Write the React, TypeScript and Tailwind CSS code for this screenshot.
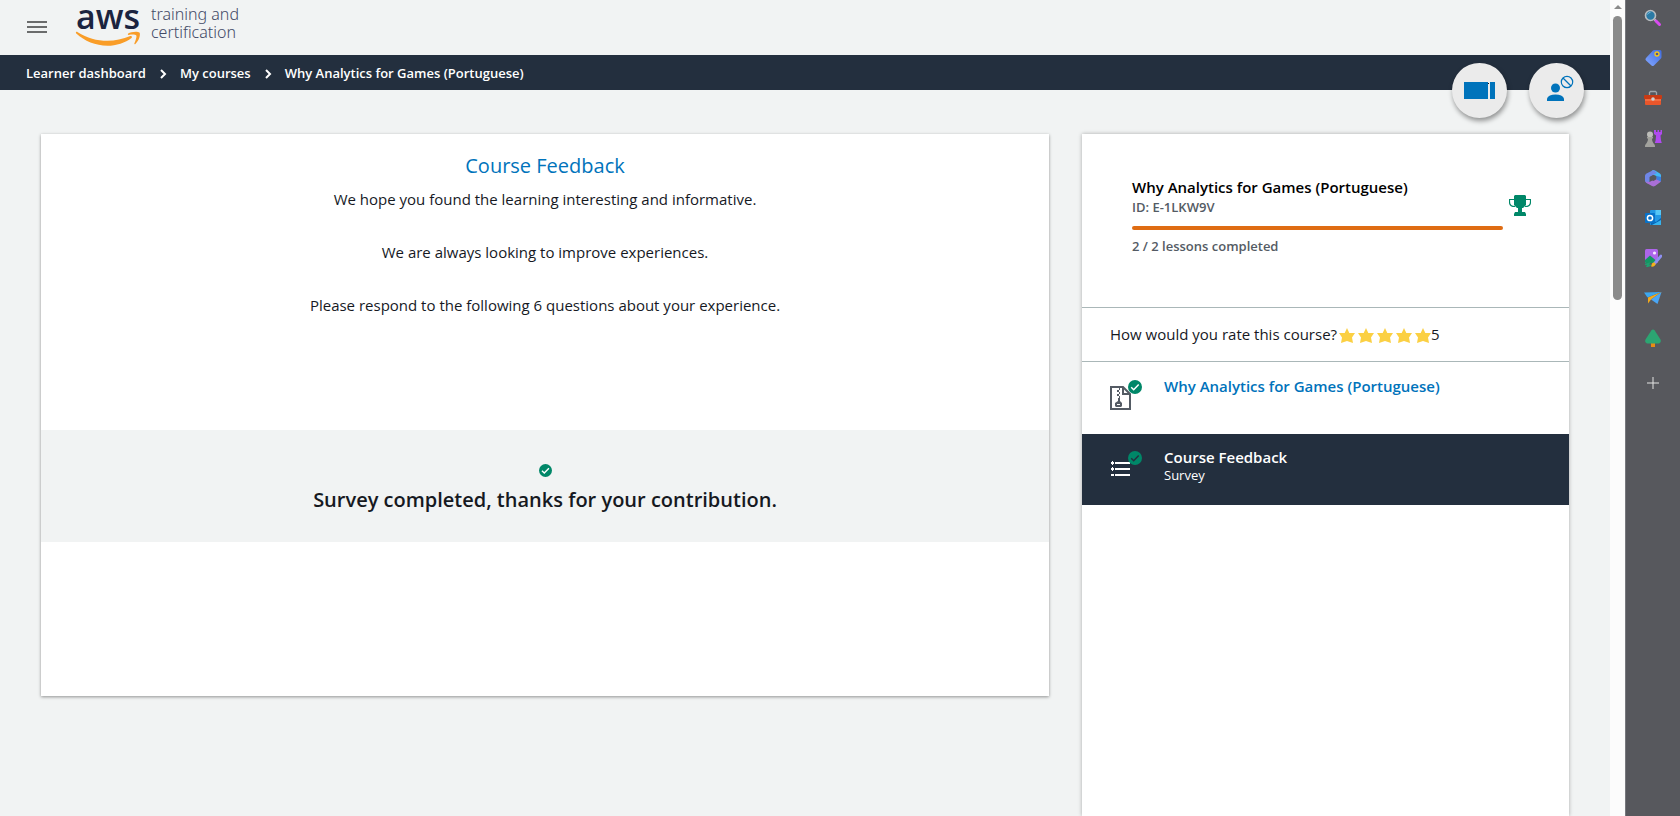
import type { ReactNode } from "react";

const stars = [1, 2, 3, 4, 5];

function AwsSmile() {
  return (
    <svg viewBox="0 0 66 16" className="-mt-1 h-4 w-[66px]" fill="#f99d28" aria-hidden="true">
      <path d="M1 1.2c.4-.5 1-.4 1.700 0C12 7 22 9.800 32.500 9.800c7.500 0 15.500-1.600 22.800-4.700 1.300-.5 2.400.8 1.200 1.800C50.500 11.500 41 14.800 32.500 14.800 20.500 14.800 9.500 10.200 1.300 2.600c-.5-.5-.6-1-.3-1.400z" />
      <path d="M53.200 2.600c2.600-2 9.800-2.600 11.200-1 1.500 1.700-.4 8.400-4 11.300-.7.6-1.300.2-1-.6.9-2.200 2.600-6.800 1.900-7.900-.8-1.100-5.400-.8-7.600-.5-.9.1-1.200-.8-.5-1.300z" />
    </svg>
  );
}

function Check({ className, mark }: { className: string; mark: string }) {
  return (
    <svg viewBox="0 0 14 14" className={className} aria-hidden="true">
      <circle cx="7" cy="7" r="7" fill="#008768" />
      <path d="M3.200 7.200l2.500 2.500 5-5.200" fill="none" stroke={mark} strokeWidth="1.500" />
    </svg>
  );
}

function Chevron() {
  return (
    <svg viewBox="0 0 8 10" className="h-[10px] w-2" fill="none" stroke="#fff" strokeWidth="2" aria-hidden="true">
      <path d="M2 1l4 4-4 4" />
    </svg>
  );
}

function ZipFile() {
  return (
    <svg viewBox="0 0 21 24" className="h-6 w-[21px]" aria-hidden="true">
      <path d="M13 1H1v22h19V8l-7-7v7h7" fill="none" stroke="#545b64" strokeWidth="2" />
      <path d="M9 2h1v2H9zM7 4h2v2H7zM9 6h1v2H9zM7 8h2v2H7zM9 10h1v2H9z" fill="#545b64" />
      <path d="M8 12h2v3l2 2v3l-1 1H6l-1-1v-3l3-2zM7 18v1h3v-1z" fill="#545b64" fillRule="evenodd" />
    </svg>
  );
}

function SurveyList() {
  return (
    <svg viewBox="0 0 19 16" className="h-4 w-[19px]" fill="#fff" aria-hidden="true">
      <path d="M4 2h15v2H4zM4 8h15v2H4zM4 14h15v2H4zM0 14h3v2H0zM1 1h1v1h1v2H2v1H1V4H0V2h1zM1 7h1v1h1v2H2v1H1v-1H0V8h1z" />
    </svg>
  );
}

function Trophy() {
  return (
    <svg viewBox="0 0 22 21" className="h-[21px] w-[22px]" fill="#008768" aria-hidden="true">
      <path d="M5 1l1-1h10l1 1v9l-3 3h-1v4h3l1 2v2H5v-2l1-2h3v-4H8l-3-3z" />
      <path d="M5.500 4.500h-5V7c0 2.500 2 4.500 5.500 4.500M16.500 4.500h5V7c0 2.500-2 4.500-5.500 4.500" fill="none" stroke="#008768" strokeWidth="1.200" />
    </svg>
  );
}

function Star() {
  return (
    <svg viewBox="0 0 16 15" className="h-[15px] w-4" fill="#fbd043" aria-hidden="true">
      <path d="M8 0l2.300 5H16l-3 4.500 1 5.500-6-2-6 2 1-5.500L0 5h5.700z" />
    </svg>
  );
}

function RoundButton({ label, children }: { label: string; children: ReactNode }) {
  return (
    <button aria-label={label} className="flex size-[55px] items-center justify-center rounded-full bg-[#ebebeb] shadow-[1px_3px_5px_rgba(0,0,0,0.4)]">
      {children}
    </button>
  );
}

const apps: { name: string; art: ReactNode }[] = [
  {
    name: "Search",
    art: (
      <>
        <path d="M10.500 10.500l2 2" stroke="#c7c9cc" strokeWidth="2" />
        <path d="M12 12l3.500 3.500" stroke="#d84bf0" strokeWidth="3" strokeLinecap="round" />
        <circle cx="6.500" cy="6.500" r="5" fill="#2b7aa5" stroke="#b9bdc1" strokeWidth="1.600" />
        <path d="M3.500 5.500a3.500 3.500 0 013-2.200" stroke="#78bcdd" fill="none" />
      </>
    ),
  },
  {
    name: "Shopping",
    art: (
      <>
        <path d="M10.500 1H16a1.500 1.500 0 011.500 1.500V8c0 .6-.2 1-.6 1.400L10 16.500a1.800 1.800 0 01-2.500 0l-5.500-5a1.800 1.800 0 010-2.500l7-7.400c.4-.4.900-.6 1.500-.6z" fill="url(#tag)" />
        <circle cx="13" cy="5" r="2" fill="#4c5694" stroke="#f6c719" strokeWidth="1.300" />
      </>
    ),
  },
  {
    name: "Tools",
    art: (
      <>
        <path d="M5.500 6V3.500l1-1h5l1 1V6" stroke="#9fa6aa" strokeWidth="1.300" fill="none" />
        <rect x="1" y="9" width="16" height="7" rx="1" fill="#e9562b" />
        <path d="M1 6h16a1 1 0 011 1v3H0V7a1 1 0 011-1z" fill="#c93a13" />
        <path d="M1 11h16" stroke="#fb8359" />
        <circle cx="9" cy="10" r="1.800" fill="#c9d0d3" />
      </>
    ),
  },
  {
    name: "Games",
    art: (
      <>
        <path d="M10 1h2v2h1.500V1H15v2h1.500V1H18v4l-1.500 1.500.5 5 .8 2.500h-7l.8-2.500.5-5L10 5z" fill="#b04af0" />
        <circle cx="6" cy="5.500" r="3" fill="#bdbdb9" />
        <path d="M3 8h6v1.500H8c0 2.500.8 3.500 2 5.500.8.500 1 1 1 3H1c0-2 .2-2.500 1-3 1.200-2 2-3 2-5.500H3z" fill="#a2a29d" />
      </>
    ),
  },
  {
    name: "Microsoft 365",
    art: (
      <>
        <path d="M8 1.500c1-.7 2-.7 3 0l4.500 2.700c1 .6 1.500 1.400 1.500 2.500V12l-4.500-1V7L6 5z" fill="#43b8f4" />
        <path d="M9.500 1L2.500 4.500C1.500 5.200 1 6 1 7v4.500c0 1 .5 1.800 1.300 2.300L5.500 15V8l7.500-4z" fill="#6f86e6" />
        <path d="M1.300 12.500L5.500 13l7.500-4 4 2.500c0 1-.5 1.800-1.500 2.300L11 17c-1 .6-2 .6-3 0l-5-2.800z" fill="#a96fd6" />
        <path d="M6.500 7.500L9.500 6l3 1.500v2.700l-3 1.800-3-1.500z" fill="#57585d" />
        <path d="M12.500 7v3.500L17 12.500V8z" fill="#3a7fe0" />
      </>
    ),
  },
  {
    name: "Outlook",
    art: (
      <>
        <rect x="6" y="1" width="11" height="15" rx="1" fill="#2298e4" />
        <path d="M11.500 1H17v5h-5.500z" fill="#55c7f6" />
        <path d="M6 10l6 3 5-4v7H7z" fill="#0864b4" />
        <path d="M8 16l9-5v5z" fill="#35b3ef" />
        <rect x="1" y="4" width="10" height="10" rx="1" fill="#0872c9" />
        <circle cx="6" cy="9" r="2.600" fill="none" stroke="#fff" strokeWidth="1.500" />
      </>
    ),
  },
  {
    name: "Image Creator",
    art: (
      <>
        <rect x="1" y="0" width="13" height="14" rx="1.500" fill="#ad65ea" />
        <path d="M1 11l5-4.500 6 5V14H2a1 1 0 01-1-1z" fill="#139663" />
        <circle cx="10.500" cy="4" r="1.600" fill="#f7e8ff" />
        <path d="M0 14h8v4H0z" fill="#57585d" />
        <path d="M1 15.500l4-1-2 3 4-1.500" stroke="#1da16f" strokeWidth="1.500" fill="none" />
        <path d="M17 7l-6 7" stroke="#8d8ff0" strokeWidth="2.800" strokeLinecap="round" />
        <path d="M8 14.500c1.500-2 4-.5 3.500 1S9.500 18 7 17.500z" fill="#f3b21b" />
      </>
    ),
  },
  {
    name: "Drop",
    art: (
      <>
        <path d="M0 3.500L17.500 3 3.500 8.500z" fill="#3ca7ef" />
        <path d="M17.500 3L4 8.500v6l3-4z" fill="#f3a91b" />
        <path d="M17.500 3L7 10.500l6.500 4.500z" fill="#4aa6f5" />
      </>
    ),
  },
  {
    name: "Tree",
    art: (
      <>
        <rect x="7" y="13" width="4" height="5" fill="#e98b12" />
        <path d="M7.300 1.500c1-1.300 2.400-1.300 3.400 0L16.500 10.500c1 2-.3 4-2.500 4H4c-2.200 0-3.500-2-2.500-4z" fill="#2ca572" />
      </>
    ),
  },
];

export default function App() {
  return (
    <div className="flex h-screen overflow-hidden bg-[#f1f3f3] font-['Open_Sans','Noto_Sans',sans-serif] text-[#16191f]">
      <div className="flex min-w-0 flex-1 flex-col">
        <header className="flex h-[55px] shrink-0 items-start">
          <button aria-label="Menu" className="mt-5 ml-[27px] flex w-5 flex-col gap-[3px] pt-px">
            <span className="h-[2px] w-full bg-[#6b6c6c]" />
            <span className="h-[2px] w-full bg-[#6b6c6c]" />
            <span className="h-[2px] w-full bg-[#6b6c6c]" />
          </button>
          <a href="#home" className="ml-7 flex items-start">
            <span className="flex w-[66px] flex-col items-center">
              <span className="h-[35px] text-[34px] leading-[32px] font-semibold text-[#1b2440]">aws</span>
              <AwsSmile />
            </span>
            <span className="ml-2.5 pt-[5px] font-['Noto_Sans',sans-serif] text-[16px] leading-[18px] font-light text-[#424a66]">
              training and
              <br />
              certification
            </span>
          </a>
        </header>

        <nav aria-label="Breadcrumb" className="flex h-[35px] shrink-0 items-center bg-[#232f3e] pt-0.5 pl-[26px] text-[13px] font-semibold text-white">
          <a href="#dashboard">Learner dashboard</a>
          <span className="mx-[13px]"><Chevron /></span>
          <a href="#courses">My courses</a>
          <span className="mx-[13px]"><Chevron /></span>
          <a href="#course">Why Analytics for Games (Portuguese)</a>
        </nav>

        <div className="z-10 -mt-[27px] mr-[26px] flex shrink-0 justify-end gap-[22px]">
          <RoundButton label="Toggle layout">
            <svg viewBox="0 0 31 17" className="h-[17px] w-[31px]" fill="#0073bb">
              <path d="M0 0h24v17H0zM26 0h5v17h-5z" />
              <path d="M24 1h1v1h-1z" fill="#111" />
            </svg>
          </RoundButton>
          <RoundButton label="Instructor unavailable">
            <svg viewBox="0 0 27 26" className="-mt-1.5 ml-2 h-[26px] w-[27px]" fill="#0073bb">
              <circle cx="8.500" cy="13" r="4.500" />
              <path d="M0 26v-2.500C1 21 4 19.500 8.500 19.500S16 21 17 23.500V26z" />
              <circle cx="20" cy="7" r="5.700" fill="none" stroke="#0073bb" strokeWidth="1.200" />
              <path d="M16 3l8 8" stroke="#0073bb" strokeWidth="1.200" />
            </svg>
          </RoundButton>
        </div>

        <div className="mt-4 flex min-h-0 flex-1 items-start gap-[33px] pr-[41px] pl-[41px]">
          <main className="min-w-0 flex-1 bg-white pb-[154px] text-center shadow-[0_1px_3px_rgba(0,0,0,0.4)]">
            <h1 className="pt-[18px] text-[20px] leading-[28px] text-[#0073bb]">Course Feedback</h1>
            <div className="flex flex-col gap-[29px] pt-[7px] text-[15px] leading-6">
              <p>We hope you found the learning interesting and informative.</p>
              <p>We are always looking to improve experiences.</p>
              <p>Please respond to the following 6 questions about your experience.</p>
            </div>
            <section className="mt-[113px] flex h-[112px] flex-col items-center bg-[#f1f3f3] pt-[34px]">
              <Check className="size-[13px]" mark="#fff" />
              <h2 className="mt-2 text-[20px] leading-[30px] font-semibold">Survey completed, thanks for your contribution.</h2>
            </section>
          </main>

          <aside className="h-full w-[487px] shrink-0 bg-white shadow-[0_0_4px_rgba(0,0,0,0.3)]">
            <div className="flex h-[174px] border-b border-[#aab7b8] pt-[41px] pl-[50px]">
              <div className="w-[371px]">
                <h2 className="text-[15px] leading-[24px] font-semibold text-black">Why Analytics for Games (Portuguese)</h2>
                <p className="text-[13px] leading-4 font-semibold text-[#545b64]">ID: E-1LKW9V</p>
                <div role="progressbar" aria-label="Lessons completed" aria-valuemin={0} aria-valuemax={2} aria-valuenow={2} className="mt-[11px] h-1 rounded-full bg-[#df6c13]" />
                <p className="mt-[6px] text-[13px] leading-5 font-semibold text-[#545b64]">2 / 2 lessons completed</p>
              </div>
              <div className="ml-[6px] pt-[20px]"><Trophy /></div>
            </div>
            <div className="flex h-[54px] items-center border-b border-[#aab7b8] pl-7 text-[15px]">
              <span>How would you rate this course?</span>
              <span className="ml-0.5 flex gap-[3px] pt-px">
                {stars.map((n) => <Star key={n} />)}
              </span>
              <span>5</span>
            </div>
            <a href="#lesson" className="flex h-[72px] pt-3 pl-7">
              <span className="relative mt-[12px] h-6 w-[54px]">
                <ZipFile />
                <Check className="absolute -top-[6px] left-[18px] size-[14px]" mark="#fff" />
              </span>
              <span className="text-[15px] leading-6 font-semibold text-[#0073bb]">Why Analytics for Games (Portuguese)</span>
            </a>
            <a href="#survey" className="flex h-[71px] bg-[#232f3e] pt-3 pl-7 text-white">
              <span className="relative mt-[14px] h-6 w-[54px]">
                <span className="block pl-px"><SurveyList /></span>
                <Check className="absolute -top-[9px] left-[18px] size-[14px]" mark="#232f3e" />
              </span>
              <span>
                <span className="block text-[15px] leading-[22px] font-semibold">Course Feedback</span>
                <span className="block text-[13px] leading-[14px]">Survey</span>
              </span>
            </a>
          </aside>
        </div>
      </div>

      <div className="flex w-[15px] shrink-0 flex-col items-center bg-[#fcfcfc] pt-[5px]" aria-hidden="true">
        <svg viewBox="0 0 8 4" className="h-1 w-2" fill="#8b8b8b"><path d="M4 0l4 4H0z" /></svg>
        <span className="mt-[7px] h-[284px] w-[9px] rounded-full bg-[#8b8b8b]" />
      </div>

      <aside aria-label="Browser apps" className="flex w-[55px] shrink-0 flex-col items-center gap-[22px] border-l border-[#77787d] bg-[#57585d] pt-[9px]">
        <svg className="absolute size-0" aria-hidden="true">
          <defs>
            <linearGradient id="tag" x1="1" y1="0" x2="0" y2="1">
              <stop offset="0" stopColor="#3f6ce0" />
              <stop offset="1" stopColor="#84a7ff" />
            </linearGradient>
          </defs>
        </svg>
        {apps.map((app) => (
          <button key={app.name} aria-label={app.name}>
            <svg viewBox="0 0 18 18" className="size-[18px]">{app.art}</svg>
          </button>
        ))}
        <button aria-label="Customize" className="mt-2">
          <svg viewBox="0 0 12 12" className="size-3" stroke="#e4e4e4" fill="none"><path d="M6 0v12M0 6h12" /></svg>
        </button>
      </aside>
    </div>
  );
}
